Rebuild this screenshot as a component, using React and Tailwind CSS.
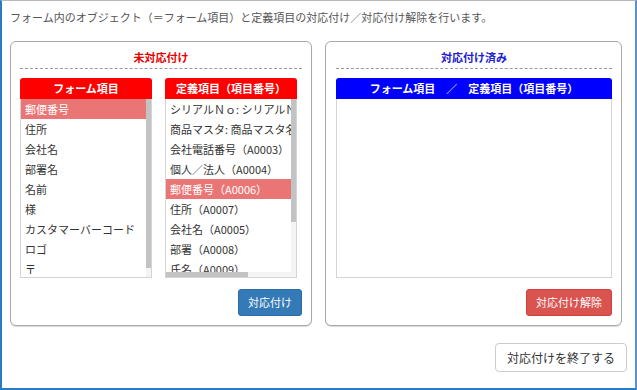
import React from "react";

const formItems = [
  "郵便番号",
  "住所",
  "会社名",
  "部署名",
  "名前",
  "様",
  "カスタマーバーコード",
  "ロゴ",
  "〒",
];

const defItems = [
  "シリアルＮｏ: シリアルＮｏ（A0001）",
  "商品マスタ: 商品マスタ名（A0002）",
  "会社電話番号（A0003）",
  "個人／法人（A0004）",
  "郵便番号（A0006）",
  "住所（A0007）",
  "会社名（A0005）",
  "部署（A0008）",
  "氏名（A0009）",
];

const Row = ({ label, selected }) => (
  <div
    className={`h-[20px] leading-[20px] pl-[4px] whitespace-nowrap overflow-hidden ${
      selected ? "bg-[#e97575] text-white" : "text-[#333]"
    }`}
  >
    {label}
  </div>
);

const ListBox = ({ title, items, selectedIndex, bar }) => (
  <div className="w-[132px] h-[200px] flex flex-col">
    <div className="h-[21px] leading-[21px] bg-[#ff0000] text-white font-bold text-center rounded-t-[3px]">
      {title}
    </div>
    <div className="relative flex-1 border border-t-0 border-[#d4d4d4] overflow-hidden bg-white">
      <div className={bar === "h" ? "pr-[5px]" : "pr-[5px]"}>
        {items.map((it, i) => (
          <Row key={it} label={it} selected={i === selectedIndex} />
        ))}
      </div>
      {bar === "v" && (
        <div className="absolute right-0 top-0 bottom-0 w-[5px] bg-[#f4f4f4]">
          <div className="h-[169px] bg-[#c3c3c3]" />
        </div>
      )}
      {bar === "h" && (
        <>
          <div className="absolute right-0 top-0 bottom-[5px] w-[5px] bg-[#f4f4f4]">
            <div className="h-[123px] bg-[#c3c3c3]" />
          </div>
          <div className="absolute left-0 right-0 bottom-0 h-[5px] bg-[#f4f4f4]">
            <div className="w-[82px] h-full bg-[#c3c3c3]" />
          </div>
        </>
      )}
    </div>
  </div>
);

const Panel = ({ title, titleColor, width, padLeft, children, button }) => (
  <div
    className={`${width} border border-[#a9a9a9] rounded-[6px] bg-white shadow-[0_1px_1px_rgba(0,0,0,0.15)] ${padLeft} pr-[9px] pb-[9px]`}
  >
    <div
      className={`pt-[8px] pb-[4px] leading-[14px] text-center font-bold border-b border-dashed border-[#999] ${titleColor}`}
    >
      {title}
    </div>
    <div className="mt-[9px]">{children}</div>
    <div className="mt-[11px] flex justify-end">{button}</div>
  </div>
);

export default function App() {
  return (
    <div className="w-[637px] h-[390px] bg-white border-t border-t-[#b8b8b8] border-l-2 border-r-2 border-b-2 border-l-[#2a7bc2] border-r-[#5a93c9] border-b-[#2a7bc2] text-[11px] font-['Noto_Sans_CJK_JP','Noto_Sans',sans-serif] flex flex-col">
      <div className="pt-[9px] pl-[8px] leading-[14px] text-[#555]">
        フォーム内のオブジェクト（＝フォーム項目）と定義項目の対応付け／対応付け解除を行います。
      </div>

      <div className="mt-[17px] pl-[8px] flex gap-[13px]">
        <Panel
          title="未対応付け"
          titleColor="text-[#e60000]"
          width="w-[302px]"
          padLeft="pl-[9px]"
          button={
            <button className="h-[27px] px-[9px] rounded-[3px] bg-[#337ab7] border border-[#2e6da4] text-white text-[11px]">
              対応付け
            </button>
          }
        >
          <div className="flex gap-[13px]">
            <ListBox title="フォーム項目" items={formItems} selectedIndex={0} bar="v" />
            <ListBox title="定義項目（項目番号）" items={defItems} selectedIndex={4} bar="h" />
          </div>
        </Panel>

        <Panel
          title="対応付け済み"
          titleColor="text-[#2020d0]"
          width="w-[297px]"
          padLeft="pl-[10px]"
          button={
            <button className="h-[27px] px-[9px] rounded-[3px] bg-[#d9534f] border border-[#d43f3a] text-white text-[11px]">
              対応付け解除
            </button>
          }
        >
          <div className="h-[200px] flex flex-col">
            <div className="h-[21px] leading-[21px] bg-[#0000ff] text-white font-bold text-center rounded-t-[3px] whitespace-pre">
              フォーム項目　／　定義項目（項目番号）
            </div>
            <div className="flex-1 border border-t-0 border-[#d4d4d4]" />
          </div>
        </Panel>
      </div>

      <div className="mt-[17px] pr-[8px] flex justify-end">
        <button className="h-[29px] px-[11px] rounded-[4px] bg-white border border-[#ccc] text-[#333] text-[12px]">
          対応付けを終了する
        </button>
      </div>
    </div>
  );
}
